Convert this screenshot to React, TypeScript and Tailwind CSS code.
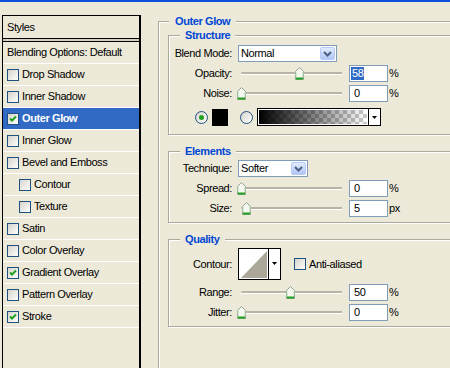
import React from "react";

const styleRows = [
  { label: "Blending Options: Default", box: false },
  { label: "Drop Shadow", box: true },
  { label: "Inner Shadow", box: true },
  { label: "Outer Glow", box: true, checked: true, selected: true },
  { label: "Inner Glow", box: true },
  { label: "Bevel and Emboss", box: true },
  { label: "Contour", box: true, indent: true },
  { label: "Texture", box: true, indent: true },
  { label: "Satin", box: true },
  { label: "Color Overlay", box: true },
  { label: "Gradient Overlay", box: true, checked: true },
  { label: "Pattern Overlay", box: true },
  { label: "Stroke", box: true, checked: true },
];

function Checkbox({ checked = false }: { checked?: boolean }) {
  return (
    <span className="w-[12px] h-[12px] shrink-0 border border-[#1C5180] bg-linear-to-br from-[#D6D3CA] to-white flex items-center justify-center">
      {checked && (
        <svg width="8" height="8" viewBox="0 0 8 8">
          <path d="M1 3.5 L3 5.5 L7 1.5" stroke="#21A121" strokeWidth="2" fill="none" />
        </svg>
      )}
    </span>
  );
}

function Radio({ checked = false }: { checked?: boolean }) {
  return (
    <span className="w-[13px] h-[13px] shrink-0 rounded-full border border-[#1C5180] bg-linear-to-br from-[#D6D3CA] to-white flex items-center justify-center">
      {checked && <span className="w-[5px] h-[5px] rounded-full bg-[#21A121]" />}
    </span>
  );
}

function Select({ value, width }: { value: string; width: string }) {
  return (
    <div className={`ml-[6px] h-[17px] border border-[#7F9DB9] bg-white flex items-center pl-[2px] ${width}`}>
      <span className="flex-1">{value}</span>
      <span className="w-[15px] h-[13px] mr-[1px] rounded-[2px] border border-[#B6CBF5] bg-linear-to-b from-[#E2EBFE] to-[#B1C5F5] flex items-center justify-center">
        <svg width="9" height="6" viewBox="0 0 9 6">
          <path d="M1 1 L4.5 4.5 L8 1" stroke="#4D6185" strokeWidth="2" fill="none" />
        </svg>
      </span>
    </div>
  );
}

function Thumb() {
  return (
    <svg width="9" height="13" viewBox="0 0 9 13">
      <path d="M0.5 4.5 L4.5 0.5 L8.5 4.5 V12.5 H0.5 Z" fill="#F7F7F2" stroke="#8FA58F" />
      <path d="M1 11.5 H8" stroke="#21A121" strokeWidth="2" />
      <path d="M1 5 V10 M8 5 V10" stroke="#B7D8B7" strokeWidth="1" />
    </svg>
  );
}

function Slider({ thumb }: { thumb: string }) {
  return (
    <div className="relative ml-[5px] w-[106px] h-[17px] shrink-0">
      <div className="absolute left-[4px] right-[1px] top-[7px] h-[2px] rounded-l-[1px] bg-[#B8B5A6] shadow-[0_1px_0_#fff]" />
      <div className={`absolute top-[2px] ${thumb}`}>
        <Thumb />
      </div>
    </div>
  );
}

function Field({ children, unit }: { children: React.ReactNode; unit: string }) {
  return (
    <>
      <div className="ml-[6px] w-[39px] h-[17px] shrink-0 border border-[#7F9DB9] bg-white flex items-center pl-[4px]">
        {children}
      </div>
      <span className="ml-[1px]">{unit}</span>
    </>
  );
}

function Label({ children }: { children: React.ReactNode }) {
  return <span className="w-[63px] shrink-0 text-right">{children}</span>;
}

function Group({ title, className, children }: { title: string; className: string; children: React.ReactNode }) {
  return (
    <fieldset className={`w-[292px] border border-[#ACA899] shadow-[1px_1px_0_#fff,inset_1px_1px_0_#fff] ${className}`}>
      <legend className="ml-[11px] px-[5px] leading-[14px] font-bold text-[#0046D5] bg-[#ECE9D8]">{title}</legend>
      {children}
    </fieldset>
  );
}

export default function App() {
  return (
    <div className="w-[450px] h-[368px] overflow-hidden bg-[#ECE9D8] text-[11px] leading-[13px] tracking-[-0.4px] text-black font-['Liberation_Sans',Arial,sans-serif]">
      <div className="h-[2px] bg-[#0B50DC]" />
      <div className="flex items-start">
        {/* Styles list */}
        <div className="ml-[2px] mt-[13px] w-[139px] h-[380px] shrink-0 border border-black border-r-2">
          <div className="h-[22px] flex items-center pl-[4px]">Styles</div>
          <div className="h-[4px] border-y border-black bg-[#D3D0C2]" />
          {styleRows.map((r) => (
            <div
              key={r.label}
              className={`h-[22px] border-b border-white flex items-center gap-[3px] ${r.indent ? "pl-[16px]" : "pl-[4px]"} ${
                r.selected ? "bg-[#316AC5] text-white font-bold" : ""
              }`}
            >
              {r.box && <Checkbox checked={r.checked} />}
              <span>{r.label}</span>
            </div>
          ))}
        </div>

        {/* Outer Glow panel */}
        <fieldset className="ml-[17px] mt-[12px] w-[312px] h-[400px] shrink-0 border border-[#ACA899] shadow-[1px_1px_0_#fff,inset_1px_1px_0_#fff]">
          <legend className="ml-[10px] px-[6px] leading-[14px] font-bold text-[#0046D5] bg-[#ECE9D8]">Outer Glow</legend>
          <div className="pl-[9px]">
            <Group title="Structure" className="pt-[3px] pb-[8px]">
              <div className="h-[17px] flex items-center">
                <Label>Blend Mode:</Label>
                <Select value="Normal" width="w-[99px]" />
              </div>
              <div className="mt-[3px] h-[17px] flex items-center">
                <Label>Opacity:</Label>
                <Slider thumb="left-[58px]" />
                <Field unit="%">
                  <span className="-ml-[3px] px-[1px] bg-[#316AC5] text-white">58</span>
                </Field>
              </div>
              <div className="mt-[3px] h-[17px] flex items-center">
                <Label>Noise:</Label>
                <Slider thumb="left-[0px]" />
                <Field unit="%">0</Field>
              </div>
              <div className="mt-[6px] h-[18px] flex items-center">
                <span className="ml-[26px]">
                  <Radio checked />
                </span>
                <div className="ml-[4px] w-[16px] h-[17px] bg-black" />
                <span className="ml-[12px]">
                  <Radio />
                </span>
                <div className="ml-[4px] w-[124px] h-[18px] border border-black flex">
                  <div className="flex-1 border border-white">
                    <div className="h-full bg-[image:linear-gradient(to_right,#000,rgba(0,0,0,0)),repeating-conic-gradient(#c9c9c9_0_25%,#fff_0_50%)] bg-[size:100%_100%,8px_8px]" />
                  </div>
                  <div className="w-[12px] border-l border-black bg-white flex items-center justify-center">
                    <svg width="5" height="3" viewBox="0 0 5 3">
                      <path d="M0 0 H5 L2.5 3 Z" fill="#000" />
                    </svg>
                  </div>
                </div>
              </div>
            </Group>

            <Group title="Elements" className="mt-[9px] pt-[2px] pb-[5px]">
              <div className="h-[17px] flex items-center">
                <Label>Technique:</Label>
                <Select value="Softer" width="w-[70px]" />
              </div>
              <div className="mt-[3px] h-[17px] flex items-center">
                <Label>Spread:</Label>
                <Slider thumb="left-[0px]" />
                <Field unit="%">0</Field>
              </div>
              <div className="mt-[3px] h-[17px] flex items-center">
                <Label>Size:</Label>
                <Slider thumb="left-[5px]" />
                <Field unit="px">5</Field>
              </div>
            </Group>

            <Group title="Quality" className="mt-[9px] pt-[2px] pb-[5px]">
              <div className="h-[32px] flex items-center">
                <Label>Contour:</Label>
                <div className="ml-[6px] w-[43px] h-[32px] border border-black bg-white flex">
                  <div className="w-[30px] h-full border-r border-black p-[1px]">
                    <svg width="27" height="28" viewBox="0 0 27 28" className="block">
                      <polygon points="1,28 27,1 27,28" fill="#ABA89A" />
                    </svg>
                  </div>
                  <div className="flex-1 flex justify-center pt-[13px]">
                    <svg width="5" height="3" viewBox="0 0 5 3">
                      <path d="M0 0 H5 L2.5 3 Z" fill="#000" />
                    </svg>
                  </div>
                </div>
                <span className="ml-[13px]">
                  <Checkbox />
                </span>
                <span className="ml-[3px]">Anti-aliased</span>
              </div>
              <div className="mt-[4px] h-[17px] flex items-center">
                <Label>Range:</Label>
                <Slider thumb="left-[49px]" />
                <Field unit="%">50</Field>
              </div>
              <div className="mt-[3px] h-[17px] flex items-center">
                <Label>Jitter:</Label>
                <Slider thumb="left-[0px]" />
                <Field unit="%">0</Field>
              </div>
            </Group>
          </div>
        </fieldset>
      </div>
    </div>
  );
}
